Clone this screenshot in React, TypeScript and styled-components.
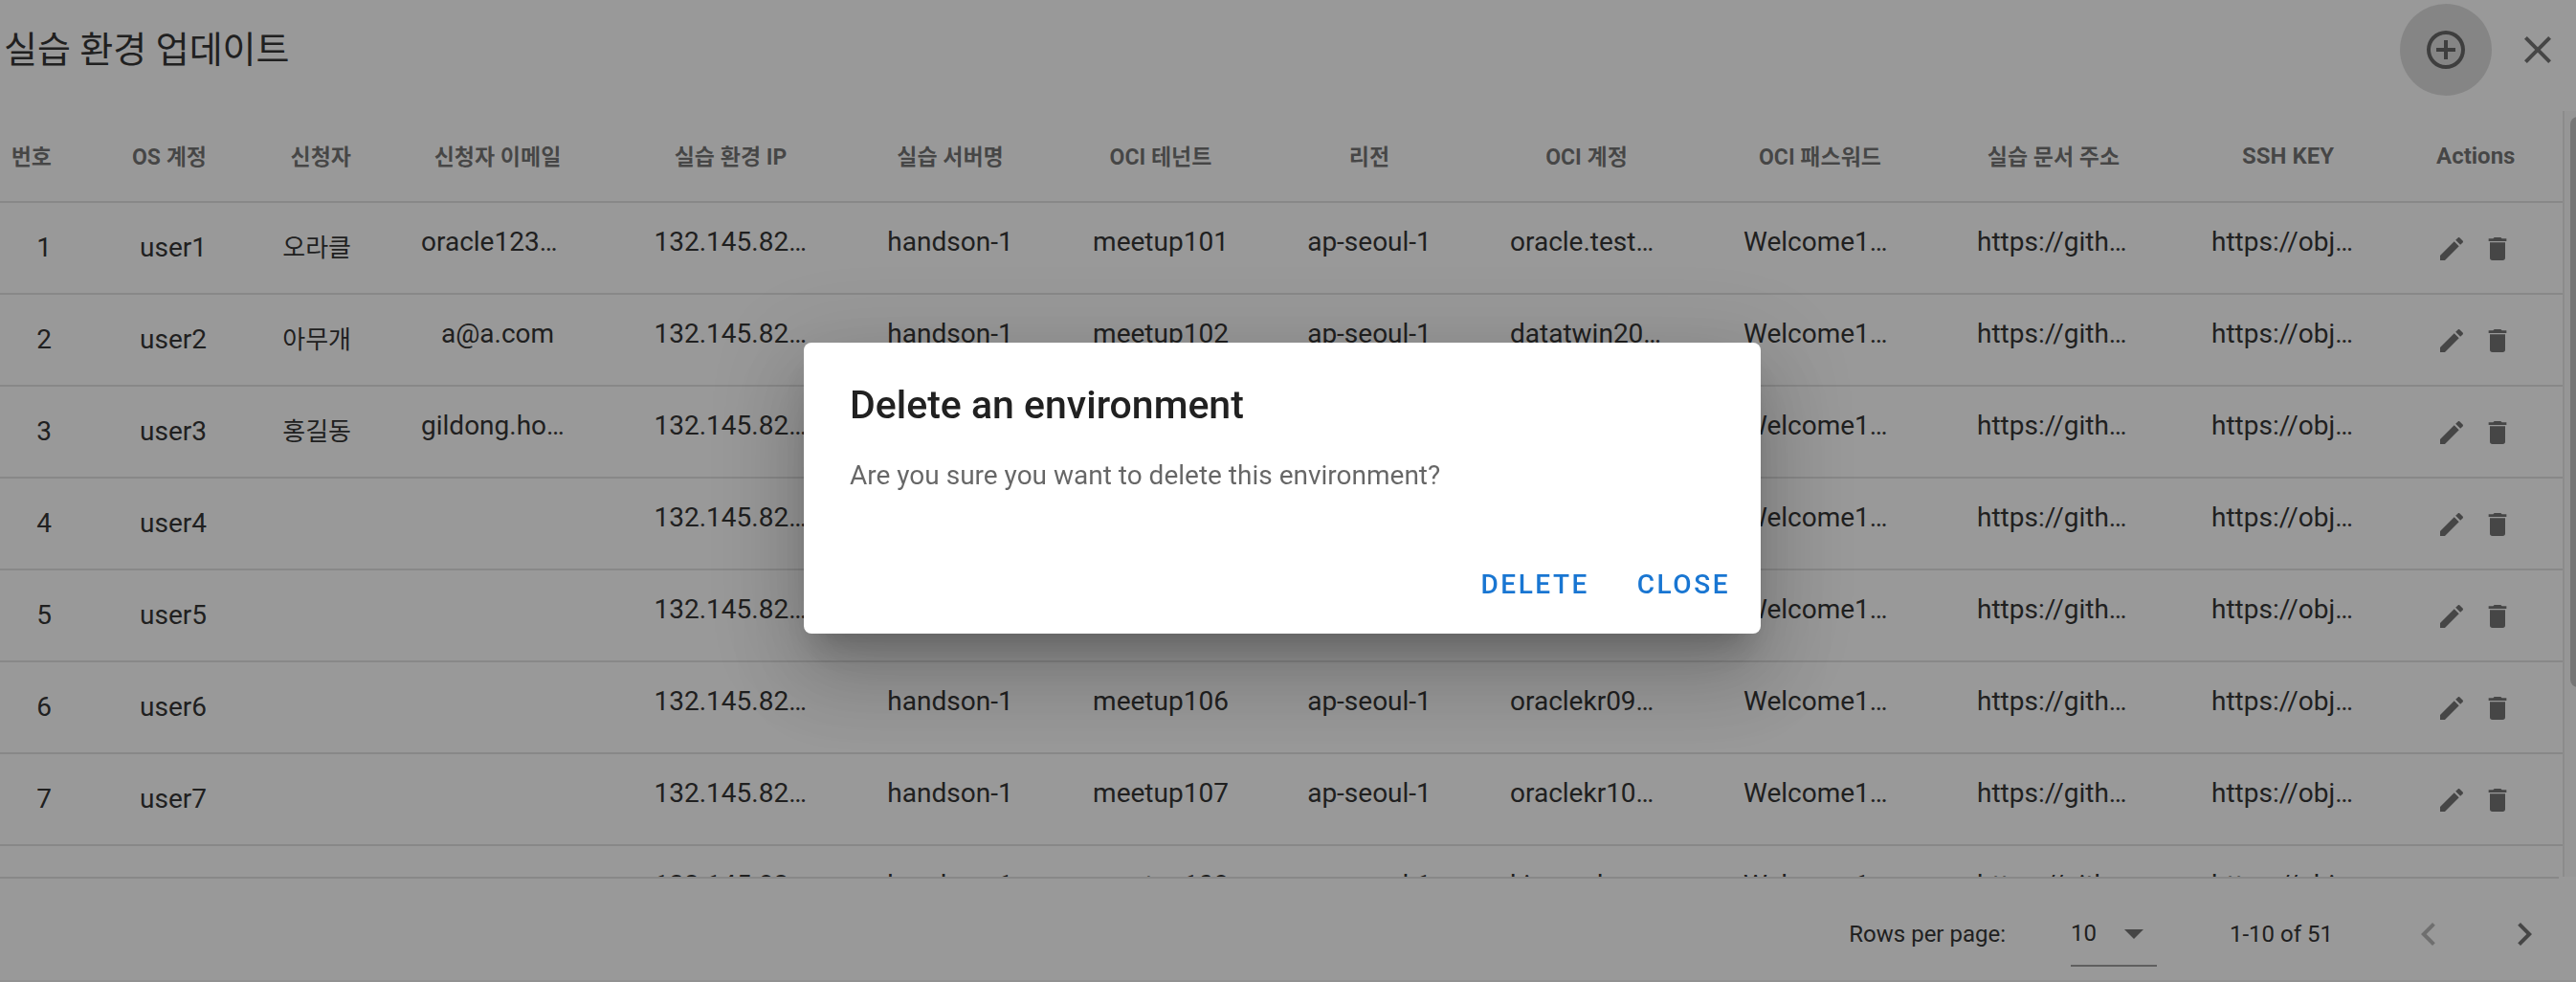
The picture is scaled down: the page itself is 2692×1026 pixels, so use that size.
import React from 'react';
import styled, { createGlobalStyle } from 'styled-components';

const GlobalStyle = createGlobalStyle`
  *, *::before, *::after { box-sizing: border-box; }
  body {
    margin: 0;
    background: #fff;
    color: #212121;
    font-family: Roboto, "Noto Sans CJK KR", sans-serif;
    font-size: 28px;
    overflow: hidden;
  }
`;

const Page = styled.div`
  display: flex;
  flex-direction: column;
  height: 100vh;
  border-bottom: 2px solid #f3f3f3;
`;

const Toolbar = styled.header`
  display: flex;
  flex: none;
  align-items: center;
  height: 104px;
  margin: 0 -8px 12px 0;
  padding-left: 4px;
`;

const PageTitle = styled.h1`
  flex: 1;
  margin: 0;
  font-size: 38px;
  font-weight: 400;
  line-height: 56px;
`;

const IconButton = styled.button<{ $size: number; $focused?: boolean }>`
  display: flex;
  flex: none;
  align-items: center;
  justify-content: center;
  width: ${(p) => p.$size}px;
  height: ${(p) => p.$size}px;
  padding: 0;
  border: 0;
  border-radius: 50%;
  background: ${(p) => (p.$focused ? 'rgba(0, 0, 0, 0.14)' : 'transparent')};
  color: rgba(0, 0, 0, 0.6);
  &:disabled { color: rgba(0, 0, 0, 0.3); }
`;

const Glyph = styled.svg<{ $size: number }>`
  display: block;
  width: ${(p) => p.$size}px;
  height: ${(p) => p.$size}px;
  fill: currentColor;
`;

const TableArea = styled.main`
  display: flex;
  flex: 1;
  min-height: 0;
`;

const TableWindow = styled.div`
  flex: 1;
  min-width: 0;
  overflow: hidden;
`;

const Rail = styled.div`
  flex: none;
  width: 14px;
  padding: 6px 0 0 6px;
  border-left: 2px solid #e8e8e8;
  background: #fafafa;
  overflow: hidden;
`;

const Thumb = styled.div`
  width: 16px;
  height: 75%;
  border-radius: 8px;
  background: #c1c1c1;
`;

const Table = styled.table`
  width: 100%;
  table-layout: fixed;
  border-collapse: separate;
  border-spacing: 0;
`;

const Col = styled.col<{ $width: number }>`
  width: ${(p) => p.$width}px;
`;

type Align = 'right' | 'center' | 'left';

const HeadCell = styled.th<{ $align: Align; $korean: boolean }>`
  height: 96px;
  padding: ${(p) => (p.$korean ? 4 : 0)}px ${(p) => (p.$align === 'center' ? 0 : 32)}px 0;
  padding-left: ${(p) => (p.$align === 'left' ? 32 : 0)}px;
  border-bottom: 2px solid rgba(0, 0, 0, 0.12);
  color: rgba(0, 0, 0, 0.6);
  font-size: ${(p) => (p.$korean ? 23 : 24)}px;
  font-weight: 700;
  line-height: 36px;
  text-align: ${(p) => p.$align};
  white-space: nowrap;
`;

const Cell = styled.td<{ $align: Align; $korean?: boolean }>`
  height: 96px;
  padding: 0 ${(p) => (p.$align === 'center' ? 0 : 32)}px;
  padding-left: ${(p) => (p.$align === 'left' ? 32 : 0)}px;
  border-bottom: 2px solid rgba(0, 0, 0, 0.12);
  font-size: ${(p) => (p.$korean ? 26 : 28)}px;
  line-height: 42px;
  text-align: ${(p) => p.$align};
  white-space: nowrap;
`;

const Truncated = styled.span`
  display: inline-block;
  max-width: 160px;
  overflow: hidden;
  text-overflow: ellipsis;
  white-space: nowrap;
`;

const RowActions = styled.div`
  display: flex;
  gap: 16px;
  padding-top: 2px;
`;

const Footer = styled.footer`
  display: flex;
  flex: none;
  align-items: center;
  justify-content: flex-end;
  height: 108px;
  margin-right: 18px;
  padding-top: 10px;
  border-top: 2px solid rgba(0, 0, 0, 0.12);
  font-size: 24px;
`;

const RowsLabel = styled.label`
  display: flex;
  align-items: center;
  gap: 68px;
  margin-right: 76px;
`;

const SelectBox = styled.span`
  display: grid;
  align-items: center;
  width: 90px;
  height: 68px;
  border-bottom: 2px solid rgba(0, 0, 0, 0.42);
  color: rgba(0, 0, 0, 0.6);
  > * { grid-area: 1 / 1; }
  > svg { justify-self: end; pointer-events: none; }
`;

const Select = styled.select`
  width: 100%;
  padding: 0;
  border: 0;
  background: transparent;
  color: #212121;
  font: inherit;
  appearance: none;
`;

const Pager = styled.nav`
  display: flex;
  gap: 20px;
  margin-left: 60px;
  margin-right: -4px;
`;

const Overlay = styled.div`
  position: fixed;
  inset: 0;
  display: flex;
  align-items: center;
  justify-content: center;
  padding-right: 12px;
  padding-bottom: 6px;
  background: rgba(33, 33, 33, 0.46);
`;

const Dialog = styled.section`
  width: 1000px;
  max-width: 90%;
  border-radius: 8px;
  background: #fff;
  box-shadow:
    0 22px 30px -14px rgba(0, 0, 0, 0.2),
    0 48px 76px 6px rgba(0, 0, 0, 0.14),
    0 18px 92px 16px rgba(0, 0, 0, 0.12);
`;

const DialogTitle = styled.h2`
  margin: 0;
  padding: 33px 48px 20px;
  font-size: 41px;
  font-weight: 500;
  line-height: 64px;
`;

const DialogText = styled.p`
  margin: 0;
  padding: 0 48px 39px;
  color: rgba(0, 0, 0, 0.6);
  font-size: 28px;
  line-height: 44px;
`;

const DialogActions = styled.div`
  display: flex;
  justify-content: flex-end;
  gap: 18px;
  padding: 16px;
`;

const TextButton = styled.button`
  min-width: 128px;
  height: 72px;
  padding: 0 16px;
  border: 0;
  border-radius: 8px;
  background: transparent;
  color: #1976d2;
  font: 500 28px Roboto, sans-serif;
  letter-spacing: 0.09em;
  text-transform: uppercase;
`;

const ICONS = {
  plusCircle:
    'M12,20C7.59,20 4,16.41 4,12C4,7.59 7.59,4 12,4C16.41,4 20,7.59 20,12C20,16.41 16.41,20 12,20M12,2A10,10 0 0,0 2,12A10,10 0 0,0 12,22A10,10 0 0,0 22,12A10,10 0 0,0 12,2M13,7H11V11H7V13H11V17H13V13H17V11H13V7Z',
  close:
    'M19,6.41L17.59,5L12,10.59L6.41,5L5,6.41L10.59,12L5,17.59L6.41,19L12,13.41L17.59,19L19,17.59L13.41,12L19,6.41Z',
  pencil:
    'M20.71,7.04C21.1,6.65 21.1,6 20.71,5.63L18.37,3.29C18,2.9 17.35,2.9 16.96,3.29L15.12,5.12L18.87,8.87M3,17.25V21H6.75L17.81,9.93L14.06,6.18L3,17.25Z',
  trash: 'M19,4H15.5L14.5,3H9.5L8.5,4H5V6H19M6,19A2,2 0 0,0 8,21H16A2,2 0 0,0 18,19V7H6V19Z',
  menuDown: 'M7,10L12,15L17,10H7Z',
  left: 'M15.41,16.58L10.83,12L15.41,7.41L14,6L8,12L14,18L15.41,16.58Z',
  right: 'M8.59,16.58L13.17,12L8.59,7.41L10,6L16,12L10,18L8.59,16.58Z',
};

function Icon({ name, size }: { name: keyof typeof ICONS; size: number }) {
  return (
    <Glyph $size={size} viewBox="0 0 24 24" aria-hidden="true">
      <path d={ICONS[name]} />
    </Glyph>
  );
}

const COLUMNS: { title: string; width: number; align: Align }[] = [
  { title: '번호', width: 86, align: 'right' },
  { title: 'OS 계정', width: 162, align: 'right' },
  { title: '신청자', width: 151, align: 'right' },
  { title: '신청자 이메일', width: 242, align: 'center' },
  { title: '실습 환경 IP', width: 245, align: 'center' },
  { title: '실습 서버명', width: 214, align: 'center' },
  { title: 'OCI 테넌트', width: 226, align: 'center' },
  { title: '리전', width: 210, align: 'center' },
  { title: 'OCI 계정', width: 244, align: 'center' },
  { title: 'OCI 패스워드', width: 244, align: 'center' },
  { title: '실습 문서 주소', width: 244, align: 'center' },
  { title: 'SSH KEY', width: 246, align: 'center' },
  { title: 'Actions', width: 164, align: 'left' },
];

const PEOPLE = [
  { name: '오라클', email: 'oracle123@oracle.com', account: 'oracle.test01@gmail.com' },
  { name: '아무개', email: 'a@a.com', account: 'datatwin2020@gmail.com' },
  { name: '홍길동', email: 'gildong.hong@oracle.com', account: 'oraclekr0301@gmail.com' },
  { name: '', email: '', account: 'oraclekr0401@gmail.com' },
  { name: '', email: '', account: 'oraclekr0501@gmail.com' },
  { name: '', email: '', account: 'oraclekr0901@gmail.com' },
  { name: '', email: '', account: 'oraclekr1001@gmail.com' },
  { name: '', email: '', account: 'kimsanlee@gmail.com' },
];

const hasKorean = (text: string) => /[가-힣]/.test(text);

export default function App() {
  return (
    <>
      <GlobalStyle />
      <Page>
        <Toolbar>
          <PageTitle>실습 환경 업데이트</PageTitle>
          <IconButton $size={96} $focused aria-label="Add">
            <Icon name="plusCircle" size={48} />
          </IconButton>
          <IconButton $size={96} aria-label="Close page">
            <Icon name="close" size={48} />
          </IconButton>
        </Toolbar>
        <TableArea>
          <TableWindow>
            <Table>
              <colgroup>
                {COLUMNS.map((c) => (
                  <Col key={c.title} $width={c.width} />
                ))}
              </colgroup>
              <thead>
                <tr>
                  {COLUMNS.map((c) => (
                    <HeadCell key={c.title} scope="col" $align={c.align} $korean={hasKorean(c.title)}>
                      {c.title}
                    </HeadCell>
                  ))}
                </tr>
              </thead>
              <tbody>
                {PEOPLE.map((p, i) => {
                  const details = [
                    p.email,
                    '132.145.82.101',
                    'handson-1',
                    `meetup10${i + 1}`,
                    'ap-seoul-1',
                    p.account,
                    'Welcome12345#',
                    'https://github.com/oracle',
                    'https://objectstorage.com',
                  ];
                  return (
                    <tr key={i}>
                      <Cell $align="right">{i + 1}</Cell>
                      <Cell $align="right">user{i + 1}</Cell>
                      <Cell $align="right" $korean>{p.name}</Cell>
                      {details.map((text, j) => (
                        <Cell key={j} $align="center">
                          <Truncated>{text}</Truncated>
                        </Cell>
                      ))}
                      <Cell $align="left">
                        <RowActions>
                          <IconButton $size={32} aria-label={`Edit user${i + 1}`}>
                            <Icon name="pencil" size={32} />
                          </IconButton>
                          <IconButton $size={32} aria-label={`Delete user${i + 1}`}>
                            <Icon name="trash" size={32} />
                          </IconButton>
                        </RowActions>
                      </Cell>
                    </tr>
                  );
                })}
              </tbody>
            </Table>
          </TableWindow>
          <Rail>
            <Thumb />
          </Rail>
        </TableArea>
        <Footer>
          <RowsLabel>
            Rows per page:
            <SelectBox>
              <Select defaultValue="10">
                <option>10</option>
              </Select>
              <Icon name="menuDown" size={48} />
            </SelectBox>
          </RowsLabel>
          <span>1-10 of 51</span>
          <Pager aria-label="Table pages">
            <IconButton $size={80} disabled aria-label="Previous page">
              <Icon name="left" size={48} />
            </IconButton>
            <IconButton $size={80} aria-label="Next page">
              <Icon name="right" size={48} />
            </IconButton>
          </Pager>
        </Footer>
      </Page>
      <Overlay>
        <Dialog role="dialog" aria-modal="true" aria-labelledby="dialog-title">
          <DialogTitle id="dialog-title">Delete an environment</DialogTitle>
          <DialogText>Are you sure you want to delete this environment?</DialogText>
          <DialogActions>
            <TextButton>Delete</TextButton>
            <TextButton>Close</TextButton>
          </DialogActions>
        </Dialog>
      </Overlay>
    </>
  );
}
